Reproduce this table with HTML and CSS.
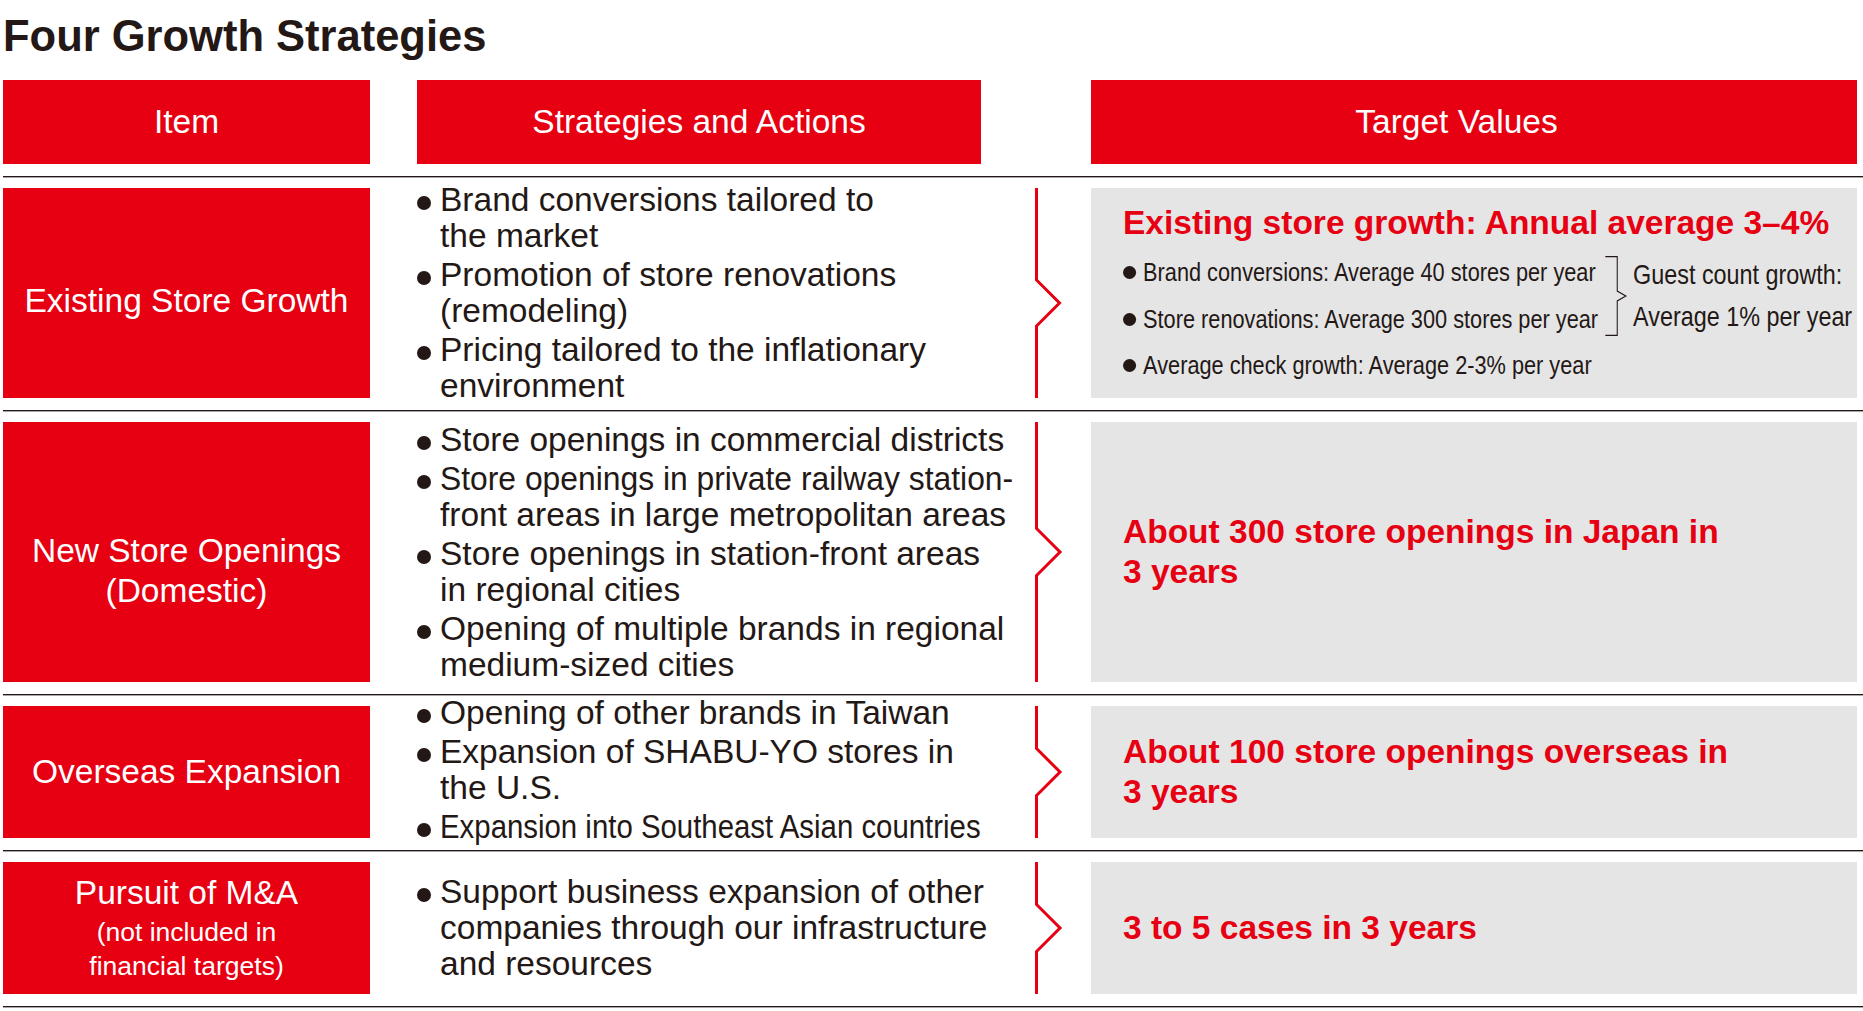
FILE: index.html
```html
<!DOCTYPE html>
<html lang="en">
<head>
<meta charset="utf-8">
<title>Four Growth Strategies</title>
<link rel="stylesheet" href="styles.css">
</head>
<body>
<div class="page">
  <h1 class="title">Four Growth Strategies</h1>

  <div class="row head">
    <div class="c-item hd">Item</div>
    <div class="c-strat hd">Strategies and Actions</div>
    <div class="c-target hd hd-target">Target Values</div>
  </div>
  <div class="rule"></div>

  <div class="row r1">
    <div class="c-item label label-r1">Existing Store Growth</div>
    <ul class="c-strat actions">
      <li>Brand conversions tailored to<br>the market</li>
      <li>Promotion of store renovations<br>(remodeling)</li>
      <li>Pricing tailored to the inflationary<br>environment</li>
    </ul>
    <div class="c-chev"><svg class="chev" width="110" height="210" viewBox="0 0 110 210"><polyline points="55.5,0 55.5,92 78.5,115 55.5,138 55.5,210"/></svg></div>
    <div class="c-target target target-r1">
      <div class="t-head">Existing store growth: Annual average 3–4%</div>
      <div class="t-detail">
        <div class="t-group">
          <ul class="t-list t-list-fixed">
            <li>Brand conversions: Average 40 stores per year</li>
            <li>Store renovations: Average 300 stores per year</li>
          </ul>
          <svg class="brace" width="27" height="80" viewBox="0 0 22 80" preserveAspectRatio="none"><path d="M0 0.6 H12 V35 L20.5 40 L12 45 V79.4 H0"/></svg>
          <div class="t-side">Guest count growth:<br>Average 1% per year</div>
        </div>
        <ul class="t-list">
          <li>Average check growth: Average 2-3% per year</li>
        </ul>
      </div>
    </div>
  </div>
  <div class="rule"></div>

  <div class="row r2">
    <div class="c-item label label-r2">New Store Openings<br>(Domestic)</div>
    <ul class="c-strat actions">
      <li>Store openings in commercial districts</li>
      <li><span class="squeeze squeeze-95">Store openings in private railway station-</span><br>front areas in large metropolitan areas</li>
      <li>Store openings in station-front areas<br>in regional cities</li>
      <li>Opening of multiple brands in regional<br>medium-sized cities</li>
    </ul>
    <div class="c-chev"><svg class="chev" width="110" height="260" viewBox="0 0 110 260"><polyline points="55.5,0 55.5,106.5 79,130 55.5,153.5 55.5,260"/></svg></div>
    <div class="c-target target">
      <div class="t-head">About 300 store openings in Japan in<br>3 years</div>
    </div>
  </div>
  <div class="rule"></div>

  <div class="row r3">
    <div class="c-item label">Overseas Expansion</div>
    <ul class="c-strat actions actions-r3">
      <li>Opening of other brands in Taiwan</li>
      <li>Expansion of SHABU-YO stores in<br>the U.S.</li>
      <li><span class="squeeze">Expansion into Southeast Asian countries</span></li>
    </ul>
    <div class="c-chev"><svg class="chev" width="110" height="132" viewBox="0 0 110 132"><polyline points="55.5,0 55.5,42.5 79,66 55.5,89.5 55.5,132"/></svg></div>
    <div class="c-target target">
      <div class="t-head">About 100 store openings overseas in<br>3 years</div>
    </div>
  </div>
  <div class="rule"></div>

  <div class="row r4">
    <div class="c-item label">
      <span class="lb-main">Pursuit of M&amp;A</span>
      <span class="lb-sub">(not included in<br>financial targets)</span>
    </div>
    <ul class="c-strat actions">
      <li>Support business expansion of other<br>companies through our infrastructure<br>and resources</li>
    </ul>
    <div class="c-chev"><svg class="chev" width="110" height="132" viewBox="0 0 110 132"><polyline points="55.5,0 55.5,42.5 79,66 55.5,89.5 55.5,132"/></svg></div>
    <div class="c-target target">
      <div class="t-head">3 to 5 cases in 3 years</div>
    </div>
  </div>
  <div class="rule"></div>
</div>
</body>
</html>
```

FILE: styles.css
```css
html, body {
  margin: 0;
  padding: 0;
  background: #ffffff;
}

body {
  font-family: "Liberation Sans", Arial, sans-serif;
  color: #231815;
}

.page {
  width: 1860px;
  padding-left: 3px;
}

.title {
  margin: 0;
  height: 80px;
  box-sizing: border-box;
  padding-top: 15px;
  font-size: 43.5px;
  line-height: 43px;
  font-weight: 700;
}

.row {
  display: grid;
  grid-template-columns: 367px 47px 564px 110px 766px;
}

.head { grid-template-rows: 84px; }
.r1 { grid-template-rows: 210px; }
.r2 { grid-template-rows: 260px; }
.r3, .r4 { grid-template-rows: 132px; }

.c-item { grid-column: 1; grid-row: 1; }
.c-strat { grid-column: 3 / 5; grid-row: 1; }
.c-chev { grid-column: 4; grid-row: 1; }
.c-target { grid-column: 5; grid-row: 1; }

.head .c-strat { grid-column: 3; }

.hd {
  background: #e60012;
  color: #ffffff;
  font-size: 33.5px;
  line-height: 40px;
  display: flex;
  align-items: center;
  justify-content: center;
}

.hd-target {
  padding-right: 35px;
}

.rule {
  border-top: 1px solid #231815;
  border-bottom: 1px solid #a8a8a8;
  margin: 12px 0 10px;
}

.label {
  background: #e60012;
  color: #ffffff;
  font-size: 33.5px;
  line-height: 40px;
  text-align: center;
  display: flex;
  flex-direction: column;
  align-items: center;
  justify-content: center;
}

.label-r1 { padding-top: 16px; }
.label-r2 { padding-top: 38px; }

.lb-main {
  display: block;
  line-height: 40px;
}

.lb-sub {
  display: block;
  font-size: 26.5px;
  line-height: 33.5px;
  margin-top: 3px;
}

.actions {
  list-style: none;
  margin: 0;
  padding: 0;
  align-self: center;
  font-size: 33.5px;
  line-height: 36px;
  display: flex;
  flex-direction: column;
  gap: 3px;
  white-space: nowrap;
}

.actions-r3 {
  margin-top: -5px;
}

.actions li {
  padding-left: 23px;
  text-indent: -23px;
}

.actions li::before {
  content: "";
  display: inline-block;
  width: 14px;
  height: 14px;
  border-radius: 50%;
  background: #231815;
  margin-right: 9px;
  vertical-align: 1px;
}

.squeeze {
  display: inline-block;
  text-indent: 0;
  transform: scaleX(0.877);
  transform-origin: left center;
}

.squeeze-95 {
  transform: scaleX(0.95);
}

.chev {
  display: block;
}

.chev polyline {
  fill: none;
  stroke: #e60012;
  stroke-width: 3;
  stroke-linejoin: miter;
}

.target {
  background: #e5e5e5;
  padding-left: 32px;
  display: flex;
  flex-direction: column;
  justify-content: center;
  white-space: nowrap;
}

.target-r1 {
  justify-content: flex-start;
  padding-top: 15px;
}

.t-head {
  color: #e60012;
  font-weight: 700;
  font-size: 33.5px;
  line-height: 40px;
}

/* condensed type: the detail block is drawn narrowed, as in the printed table */
.t-detail {
  margin-top: 6px;
  transform: scaleX(0.82);
  transform-origin: 0 0;
}

.t-group {
  display: flex;
  align-items: center;
}

.t-list {
  list-style: none;
  margin: 0;
  padding: 0;
  font-size: 26.5px;
  line-height: 46.5px;
}

.t-list-fixed {
  width: 588px;
  flex: none;
}

.t-list li::before {
  content: "";
  display: inline-block;
  width: 16px;
  height: 13px;
  border-radius: 50%;
  background: #231815;
  margin-right: 8.5px;
  vertical-align: 2px;
}

.brace {
  display: block;
  flex: none;
}

.brace path {
  fill: none;
  stroke: #231815;
  stroke-width: 1.3;
  vector-effect: non-scaling-stroke;
}

.t-side {
  margin-left: 7px;
  font-size: 28.5px;
  line-height: 41.7px;
}
```
